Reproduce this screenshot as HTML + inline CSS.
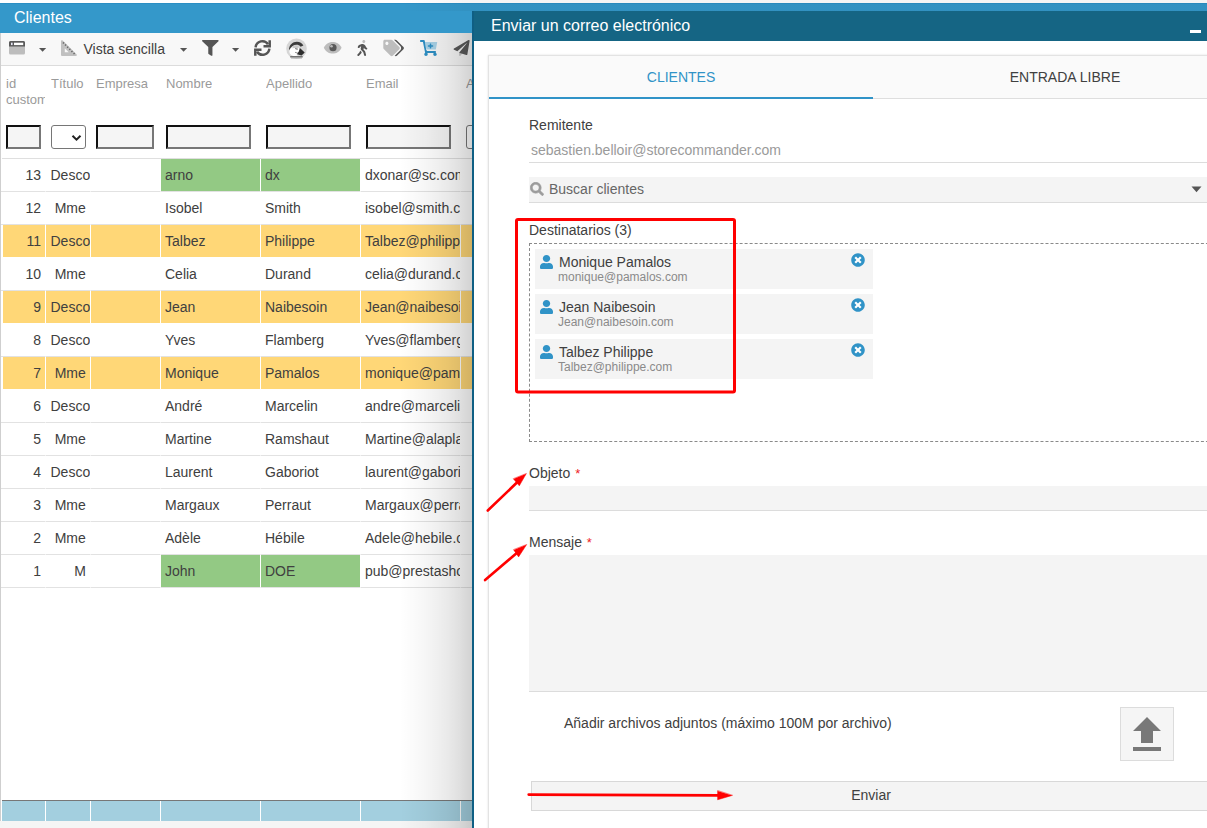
<!DOCTYPE html>
<html lang="es">
<head>
<meta charset="utf-8">
<title>Clientes</title>
<style>
*{box-sizing:border-box;margin:0;padding:0}
html,body{width:1207px;height:828px;overflow:hidden;background:#fff;font-family:"Liberation Sans",Arial,sans-serif;color:#404040}
#left{position:absolute;left:0;top:3px;width:480px;height:818px;background:#fff;border-left:1px solid #cfcfcf}
#bot{position:absolute;left:0;top:821px;width:480px;height:7px;background:#f5f5f5}
#ltitle{position:absolute;left:0;top:3px;width:1207px;height:30px;background:#3498ca;border-top:1px solid #2b8fc4;color:#fff;font-size:16px;line-height:27.500px;padding-left:14px}
#tbar{position:absolute;left:1px;top:33px;width:480px;height:33px;background:#f8f8f8;border-bottom:1px solid #dcdcdc}
#tbar .t{position:absolute;top:0;line-height:33px;font-size:14px;color:#404040}
#hdr{position:absolute;left:2px;top:66px;width:480px;height:93px;background:#fff;border-bottom:1px solid #dfdfdf}
#hdr .h{position:absolute;top:10px;font-size:13px;line-height:15.500px;color:#9a9a9a;overflow:hidden;white-space:normal}
#hdr .f{position:absolute;top:59px;height:24px;background:#f5f5f5;border:2px solid;border-color:#111 #777 #777 #111}
#hdr .s{position:absolute;top:59px;height:24px;background:#fff;border:1px solid #767676;border-radius:3px}
#rows{position:absolute;left:0;top:159px;width:480px}
.r{position:relative;height:33px;font-size:14px;line-height:32px;white-space:nowrap}
.r span{position:absolute;top:0;height:33px;overflow:hidden;border-bottom:1px solid #e2e2e2;border-right:1px solid #fff}
.r.y span{background:#ffd777;border-bottom-color:#fff}
.r::before{content:"";position:absolute;left:1px;top:32px;width:2px;height:1px;background:#e2e2e2}
.r.y::before{background:#fff}
.c0{left:3px;width:43px;text-align:right;padding-right:4px}
.c1{left:46px;width:45px;text-align:center;padding-left:4.500px}
.c2{left:91px;width:70px}
.c3{left:161px;width:100px;padding-left:4px}
.c4{left:261px;width:100px;padding-left:4px}
.c5{left:361px;width:100px;padding-left:4px}
.c6{left:461px;width:30px}
.r span.g{background:#93c984}
#foot{position:absolute;left:2px;top:800px;width:480px;height:21px;background:#a3cfdf;border-top:1px solid #777}
#foot i{position:absolute;top:0;width:1px;height:20px;background:#fff}
#shadow{position:absolute;left:400px;top:33px;width:72px;height:795px;background:linear-gradient(to right,rgba(0,0,0,0) 0%,rgba(0,0,0,.035) 35%,rgba(0,0,0,.082) 65%,rgba(0,0,0,.12) 82%,rgba(0,0,0,.175) 100%)}
#shadow2{position:absolute;left:400px;top:0;width:807px;height:11px;background:linear-gradient(to right,rgba(0,0,0,0) 0,rgba(0,0,0,.045) 72px,rgba(0,0,0,.045) 100%)}
#modal{position:absolute;left:472px;top:11px;width:740px;height:820px;background:#fff;border-left:2px solid #0f5f84;overflow:hidden}
#mhead{position:absolute;left:-2px;top:0;width:740px;height:30px;background:#156584;color:#fff;font-size:16px;line-height:29.500px;padding-left:19px}
#tabs{position:absolute;left:14px;top:44px;width:760px;height:800px;border:1px solid #e3e3e3;background:#fff;box-shadow:0 0 2px rgba(0,0,0,.13)}
#tabrow{position:absolute;left:0;top:0;width:760px;height:43px;background:#fafafa;border-bottom:1px solid #dedede}
.tab{position:absolute;top:0;height:43px;line-height:43px;width:384px;text-align:center;font-size:14px;color:#404040}
.tab.a{color:#3093c7;border-bottom:2px solid #3093c7}
.lbl{position:absolute;left:529px;font-size:14px;color:#404040;line-height:16px}
.lbl b{color:#ee1c24;font-weight:normal;margin-left:1px;font-size:13px}
.fld{position:absolute;left:529px;width:700px;background:#f4f4f4;border-bottom:1px solid #dcdcdc}
.rc{position:absolute;left:535px;width:338px;height:40px;background:#f4f4f4}
.rc .n{position:absolute;left:24px;top:5px;font-size:14px;line-height:16px;color:#404040}
.rc .e{position:absolute;left:23px;top:21px;font-size:12px;line-height:14px;color:#8a8a8a}
#min{position:absolute;left:718px;top:19px;width:11px;height:2.500px;background:#fff}
#dash{position:absolute;left:529px;top:243px;width:700px;height:199px;border:1px dashed #8a8a8a}
.rc .u{position:absolute;left:5px;top:5.500px}
.rc .x{position:absolute;left:316px;top:4.200px}
#upl{position:absolute;left:1120px;top:707px;width:54px;height:54px;background:#f5f5f5;border:1px solid #dcdcdc}
#upl svg{position:absolute;left:12px;top:9px}
#send{position:absolute;left:531px;top:781px;width:700px;height:30px;background:#f4f4f4;border:1px solid #d8d8d8;text-align:center;font-size:14px;line-height:27px;padding-right:20px;color:#404040}
</style>
</head>
<body>
<div id="left"></div><div id="bot"></div>
<div id="ltitle">Clientes</div>
<div id="tbar">
<span class="t" style="left:82.500px">Vista sencilla</span>
</div>
<svg id="ticons" style="position:absolute;left:0;top:33px" width="472" height="32" viewBox="0 33 472 32">
<!-- window -->
<rect x="9" y="41" width="16" height="13.500" rx="1.500" fill="#bdbdbd"/>
<path d="M9 46.500V42.500a1.500 1.500 0 0 1 1.500-1.500h13a1.500 1.500 0 0 1 1.500 1.500v4z" fill="#5a5a5a"/>
<rect x="11" y="42.700" width="1.600" height="2.400" fill="#e8e8f8"/><rect x="14" y="42.700" width="9.200" height="2.400" fill="#fff"/>
<path d="M39 48h7.200l-3.600 3.800z" fill="#555"/>
<!-- ruler triangle -->
<path d="M61 41.200a1 1 0 0 1 1.700-.7l13.800 13.800a1 1 0 0 1-.7 1.700H62a1 1 0 0 1-1-1zM64.800 48.300v3.900h3.900z" fill="#c0c0c0" fill-rule="evenodd"/>
<path d="M63 42.500L75.500 55" stroke="#666" stroke-width="1.600" stroke-dasharray="1.300 1.700" fill="none"/>
<path d="M180 48h7.200l-3.600 3.800z" fill="#555"/>
<!-- filter -->
<g transform="translate(202,40) scale(0.03262,0.03100)"><path fill="#555" d="M487.976 0H24.028C2.710 0-8.047 25.866 7.058 40.971L192 225.941V432c0 7.831 3.821 15.170 10.237 19.662l80 55.980C298.020 518.690 320 507.493 320 487.980V225.941l184.947-184.970C520.021 25.896 509.338 0 487.976 0z"/></g>
<path d="M232 48h7.200l-3.600 3.800z" fill="#555"/>
<!-- sync -->
<g fill="none" stroke="#555" stroke-width="2.500">
<path d="M255.600 47.300A6.800 6.800 0 0 1 268 44.200"/>
<path d="M269.700 40.200V46.200H263.500"/>
<path d="M269.400 48.700A6.800 6.800 0 0 1 257 51.800"/>
<path d="M255.300 55.800V49.800H261.500"/>
</g>
<!-- prestashop -->
<circle cx="296.500" cy="48.800" r="10.300" fill="#d6d6d6"/>
<ellipse cx="294.800" cy="51.400" rx="5.400" ry="4.900" fill="#fff"/>
<path d="M289 50.300C289 44.600 292.800 41.700 296.800 41.700C299.900 41.700 302.200 43.200 303.400 45.400L300.600 46.800C299.600 45.400 298.200 44.800 296.600 44.800C293.200 44.800 291 46.800 289 50.300z" fill="#3c3c3c"/>
<path d="M292.500 46.300C294 45.300 296.500 45 298.500 46.500L297.500 49.200C296 48 294.500 47.800 292.500 48.500z" fill="#c9c9c9"/>
<path d="M295.200 48.600L297.600 49.300" stroke="#666" stroke-width="1" fill="none"/>
<path d="M299.900 48L304.700 52.600L301.600 55.600L296.800 54.200L298.800 51.600z" fill="#2e2e2e"/>
<path d="M295 52.300L298 53.200" stroke="#777" stroke-width=".8" fill="none"/>
<rect x="290.200" y="56.300" width="12.500" height="1.100" fill="#4a4a4a"/>
<rect x="291" y="57.400" width="11" height="1.100" fill="#a8a8a8"/>
<!-- eye -->
<path d="M323.800 47.700C326 43.300 329.300 41.900 332.700 41.900S339.400 43.300 341.600 47.700C339.400 52.100 336.100 53.500 332.700 53.500S326 52.100 323.800 47.700z" fill="#bdbdbd"/>
<circle cx="333" cy="47.700" r="3.600" fill="#5a5a5a"/><circle cx="331.500" cy="46.200" r="1.300" fill="#bdbdbd"/>
<!-- walking -->
<g transform="translate(357.300,40) scale(0.03125)"><path fill="#bdbdbd" d="M208 96c26.500 0 48-21.500 48-48S234.500 0 208 0s-48 21.500-48 48 21.500 48 48 48z"/><path fill="#555" d="M302.500 245.100l-23.300-11.800-9.700-29.400c-14.700-44.600-55.700-75.800-102.200-75.900-36-.1-55.900 10.100-93.300 25.200-21.600 8.700-39.300 25.200-49.700 46.200L17.600 213c-7.800 15.800-1.500 35 14.200 42.900 15.600 7.900 34.600 1.500 42.500-14.300L81 228c3.500-7 9.300-12.500 16.500-15.400l26.800-10.800-15.200 60.700c-5.200 20.800.4 42.900 14.900 58.800l59.900 65.400c7.200 7.900 12.300 17.400 14.900 27.700l18.300 73.300c4.300 17.100 21.700 27.600 38.800 23.300 17.100-4.300 27.600-21.700 23.300-38.800l-22.200-89c-2.600-10.300-7.700-19.900-14.900-27.700l-45.500-49.700 17.200-68.700 5.500 16.500c5.300 16.100 16.700 29.400 31.700 37l23.300 11.800c15.600 7.900 34.600 1.500 42.500-14.300 7.700-15.700 1.400-35.100-14.300-43zM73.600 385.800c-3.200 8.100-8 15.400-14.200 21.500l-50 50.100c-12.500 12.500-12.500 32.800 0 45.300s32.700 12.500 45.200 0l59.400-59.400c6.100-6.100 10.900-13.400 14.200-21.500l13.500-33.800c-55.300-60.300-38.700-41.800-47.400-53.700l-20.700 51.500z"/></g>
<!-- tags -->
<g transform="translate(383.300,39.800) scale(0.03220)"><path fill="#bdbdbd" d="M497.941 225.941L286.059 14.059A48 48 0 0 0 252.118 0H48C21.490 0 0 21.490 0 48v204.118a48 48 0 0 0 14.059 33.941l211.882 211.882c18.744 18.745 49.136 18.746 67.882 0l204.118-204.118c18.745-18.745 18.745-49.137 0-67.882zM112 160c-26.510 0-48-21.490-48-48s21.490-48 48-48 48 21.490 48 48-21.490 48-48 48z"/><path fill="#555" d="M625.941 293.823L421.823 497.941c-18.745 18.745-49.137 18.745-67.882 0l-.360-.360L527.640 323.522c16.999-16.999 26.360-39.600 26.360-63.640s-9.362-46.641-26.360-63.640L331.397 0h48.721a48 48 0 0 1 33.941 14.059l211.882 211.882c18.745 18.745 18.745 49.137 0 67.882z"/></g>
<!-- cart plus -->
<g transform="translate(420,40) scale(0.03125)"><path fill="#a9d3e8" d="M159 64H552l-45 240H205z"/><path fill="#2d8fc4" d="M504.717 320H211.572l6.545 32h268.418c15.401 0 26.816 14.301 23.403 29.319l-5.517 24.276C523.112 414.668 536 433.828 536 456c0 31.202-25.519 56.444-56.824 55.994-29.823-.429-54.350-24.631-55.155-54.447-.440-16.287 6.085-31.049 16.803-41.548H231.176C241.553 426.165 248 440.326 248 456c0 31.813-26.528 57.431-58.670 55.938-28.540-1.325-51.751-24.385-53.251-52.917-1.158-22.034 10.436-41.455 28.051-51.586L93.883 64H24C10.745 64 0 53.255 0 40V24C0 10.745 10.745 0 24 0h102.529c11.401 0 21.228 8.021 23.513 19.190L159.208 64l40 256zM408 168h-48v-40c0-8.837-7.163-16-16-16h-16c-8.837 0-16 7.163-16 16v40h-48c-8.837 0-16 7.163-16 16v16c0 8.837 7.163 16 16 16h48v40c0 8.837 7.163 16 16 16h16c8.837 0 16-7.163 16-16v-40h48c8.837 0 16-7.163 16-16v-16c0-8.837-7.163-16-16-16z"/></g>
<!-- paper plane -->
<g transform="translate(453.600,40) scale(0.03125)"><path fill="#c8c8c8" d="M176 407v80.500c0 23.600 28.500 32.900 42.500 15.800L282 426z"/><path fill="#5a5a5a" d="M476 3.200L12.500 270.600c-18.100 10.400-15.800 35.600 2.200 43.200L121 358.400l287.300-253.200c5.500-4.900 13.300 2.600 8.600 8.300L176 407l230.600 71.200c14.200 6 30.400-2.900 33-18.200l72-432C515 7.800 493.300-6.800 476 3.200z"/></g>
</svg>
<div id="hdr">
<div class="h" style="left:4px;width:39px">id custom</div>
<div class="h" style="left:49px">Título</div>
<div class="h" style="left:94px">Empresa</div>
<div class="h" style="left:164px">Nombre</div>
<div class="h" style="left:264px">Apellido</div>
<div class="h" style="left:364px">Email</div>
<div class="h" style="left:464px">A</div>
<div class="f" style="left:4px;width:35px"></div>
<div class="s" style="left:49px;width:35px"><svg style="position:absolute;left:19px;top:7.500px" width="11" height="8" viewBox="0 0 11 8"><path d="M1.500 1.700L5.500 5.700L9.500 1.700" fill="none" stroke="#222" stroke-width="2"/></svg></div>
<div class="f" style="left:94px;width:58px"></div>
<div class="f" style="left:164px;width:85px"></div>
<div class="f" style="left:264px;width:85px"></div>
<div class="f" style="left:364px;width:85px"></div>
<div class="s" style="left:464px;width:35px"></div>
</div>
<div id="rows">
<div class="r"><span class="c0">13</span><span class="c1">Desco</span><span class="c2"></span><span class="c3 g">arno</span><span class="c4 g">dx</span><span class="c5">dxonar@sc.com</span><span class="c6"></span></div>
<div class="r"><span class="c0">12</span><span class="c1">Mme</span><span class="c2"></span><span class="c3">Isobel</span><span class="c4">Smith</span><span class="c5">isobel@smith.com</span><span class="c6"></span></div>
<div class="r y"><span class="c0">11</span><span class="c1">Desco</span><span class="c2"></span><span class="c3">Talbez</span><span class="c4">Philippe</span><span class="c5">Talbez@philippe.com</span><span class="c6"></span></div>
<div class="r"><span class="c0">10</span><span class="c1">Mme</span><span class="c2"></span><span class="c3">Celia</span><span class="c4">Durand</span><span class="c5">celia@durand.com</span><span class="c6"></span></div>
<div class="r y"><span class="c0">9</span><span class="c1">Desco</span><span class="c2"></span><span class="c3">Jean</span><span class="c4">Naibesoin</span><span class="c5">Jean@naibesoin.com</span><span class="c6"></span></div>
<div class="r"><span class="c0">8</span><span class="c1">Desco</span><span class="c2"></span><span class="c3">Yves</span><span class="c4">Flamberg</span><span class="c5">Yves@flamberg.com</span><span class="c6"></span></div>
<div class="r y"><span class="c0">7</span><span class="c1">Mme</span><span class="c2"></span><span class="c3">Monique</span><span class="c4">Pamalos</span><span class="c5">monique@pamalos.com</span><span class="c6"></span></div>
<div class="r"><span class="c0">6</span><span class="c1">Desco</span><span class="c2"></span><span class="c3">André</span><span class="c4">Marcelin</span><span class="c5">andre@marcelin.com</span><span class="c6"></span></div>
<div class="r"><span class="c0">5</span><span class="c1">Mme</span><span class="c2"></span><span class="c3">Martine</span><span class="c4">Ramshaut</span><span class="c5">Martine@alaplage.com</span><span class="c6"></span></div>
<div class="r"><span class="c0">4</span><span class="c1">Desco</span><span class="c2"></span><span class="c3">Laurent</span><span class="c4">Gaboriot</span><span class="c5">laurent@gaboriot.com</span><span class="c6"></span></div>
<div class="r"><span class="c0">3</span><span class="c1">Mme</span><span class="c2"></span><span class="c3">Margaux</span><span class="c4">Perraut</span><span class="c5">Margaux@perraut.com</span><span class="c6"></span></div>
<div class="r"><span class="c0">2</span><span class="c1">Mme</span><span class="c2"></span><span class="c3">Adèle</span><span class="c4">Hébile</span><span class="c5">Adele@hebile.com</span><span class="c6"></span></div>
<div class="r"><span class="c0">1</span><span class="c1" style="text-align:right;padding-right:4px">M</span><span class="c2"></span><span class="c3 g">John</span><span class="c4 g">DOE</span><span class="c5">pub@prestashop.com</span><span class="c6"></span></div>
</div>
<div id="foot"><i style="left:43px"></i><i style="left:88px"></i><i style="left:158px"></i><i style="left:258px"></i><i style="left:358px"></i><i style="left:458px"></i></div>
<div id="shadow"></div><div id="shadow2"></div>
<div id="modal">
<div id="mhead">Enviar un correo electrónico<i id="min"></i></div>
<div id="tabs">
<div id="tabrow"><div class="tab a" style="left:0">CLIENTES</div><div class="tab" style="left:384px">ENTRADA LIBRE</div></div>
</div>
</div>
<div class="lbl" style="top:117px">Remitente</div>
<div class="lbl" style="top:142px;left:531px;color:#9a9a9a">sebastien.belloir@storecommander.com</div>
<div class="fld" style="top:162px;height:1px;background:none"></div>
<div class="fld" style="top:177px;height:26px"></div>
<svg style="position:absolute;left:530px;top:182px" width="14" height="14" viewBox="-10 -10 532 532"><path fill="#9c9c9c" stroke="#9c9c9c" stroke-width="22" d="M505 442.700L405.300 343c-4.500-4.500-10.600-7-17-7H372c27.600-35.300 44-79.700 44-128C416 93.100 322.900 0 208 0S0 93.100 0 208s93.100 208 208 208c48.300 0 92.700-16.400 128-44v16.300c0 6.400 2.500 12.500 7 17l99.700 99.700c9.400 9.400 24.600 9.400 33.900 0l28.300-28.300c9.400-9.400 9.400-24.600.1-34zM208 336c-70.700 0-128-57.200-128-128 0-70.700 57.200-128 128-128 70.700 0 128 57.200 128 128 0 70.700-57.200 128-128 128z"/></svg>
<div class="lbl" style="top:181px;left:549px;color:#666">Buscar clientes</div>
<svg style="position:absolute;left:1191px;top:186px" width="11" height="7" viewBox="0 0 11 7"><path d="M.5.500h10L5.500 6.300z" fill="#555"/></svg>
<div class="lbl" style="top:222px">Destinatarios (3)</div>
<div id="dash"></div>
<div class="rc" style="top:249px"><svg class="u" width="13" height="14" viewBox="0 0 448 512" preserveAspectRatio="none"><path fill="#3093c7" d="M224 256c70.700 0 128-57.300 128-128S294.700 0 224 0 96 57.300 96 128s57.300 128 128 128zm89.600 32h-16.700c-22.200 10.200-46.900 16-72.900 16s-50.600-5.800-72.900-16h-16.700C60.200 288 0 348.200 0 422.400V464c0 26.500 21.500 48 48 48h352c26.500 0 48-21.500 48-48v-41.600c0-74.200-60.200-134.400-134.400-134.400z"/></svg><div class="n">Monique Pamalos<span class="c6"></span></div><div class="e">monique@pamalos.com<span class="c6"></span></div><svg class="x" width="14" height="14" viewBox="0 0 512 512"><circle cx="256" cy="256" r="200" fill="#fff"/><path fill="#3093c7" d="M256 8C119 8 8 119 8 256s111 248 248 248 248-111 248-248S393 8 256 8zm121.600 313.100c4.700 4.700 4.700 12.300 0 17L338 377.600c-4.700 4.700-12.300 4.700-17 0L256 312l-65.100 65.600c-4.700 4.700-12.300 4.700-17 0L134.400 338c-4.700-4.700-4.700-12.300 0-17l65.600-65-65.600-65.100c-4.700-4.700-4.700-12.300 0-17l39.600-39.600c4.700-4.700 12.300-4.700 17 0l65 65.700 65.100-65.600c4.700-4.700 12.300-4.700 17 0l39.600 39.600c4.700 4.700 4.700 12.300 0 17L312 256l65.600 65.100z"/></svg><span class="c6"></span></div>
<div class="rc" style="top:294px"><svg class="u" width="13" height="14" viewBox="0 0 448 512" preserveAspectRatio="none"><path fill="#3093c7" d="M224 256c70.700 0 128-57.300 128-128S294.700 0 224 0 96 57.300 96 128s57.300 128 128 128zm89.600 32h-16.700c-22.200 10.200-46.900 16-72.900 16s-50.600-5.800-72.900-16h-16.700C60.200 288 0 348.200 0 422.400V464c0 26.500 21.500 48 48 48h352c26.500 0 48-21.500 48-48v-41.600c0-74.200-60.200-134.400-134.400-134.400z"/></svg><div class="n">Jean Naibesoin<span class="c6"></span></div><div class="e">Jean@naibesoin.com<span class="c6"></span></div><svg class="x" width="14" height="14" viewBox="0 0 512 512"><circle cx="256" cy="256" r="200" fill="#fff"/><path fill="#3093c7" d="M256 8C119 8 8 119 8 256s111 248 248 248 248-111 248-248S393 8 256 8zm121.600 313.100c4.700 4.700 4.700 12.300 0 17L338 377.600c-4.700 4.700-12.300 4.700-17 0L256 312l-65.100 65.600c-4.700 4.700-12.300 4.700-17 0L134.400 338c-4.700-4.700-4.700-12.300 0-17l65.600-65-65.600-65.100c-4.700-4.700-4.700-12.300 0-17l39.600-39.600c4.700-4.700 12.300-4.700 17 0l65 65.700 65.100-65.600c4.700-4.700 12.300-4.700 17 0l39.600 39.600c4.700 4.700 4.700 12.300 0 17L312 256l65.600 65.100z"/></svg><span class="c6"></span></div>
<div class="rc" style="top:339px"><svg class="u" width="13" height="14" viewBox="0 0 448 512" preserveAspectRatio="none"><path fill="#3093c7" d="M224 256c70.700 0 128-57.300 128-128S294.700 0 224 0 96 57.300 96 128s57.300 128 128 128zm89.600 32h-16.700c-22.200 10.200-46.900 16-72.900 16s-50.600-5.800-72.900-16h-16.700C60.200 288 0 348.200 0 422.400V464c0 26.500 21.500 48 48 48h352c26.500 0 48-21.500 48-48v-41.600c0-74.200-60.200-134.400-134.400-134.400z"/></svg><div class="n">Talbez Philippe<span class="c6"></span></div><div class="e">Talbez@philippe.com<span class="c6"></span></div><svg class="x" width="14" height="14" viewBox="0 0 512 512"><circle cx="256" cy="256" r="200" fill="#fff"/><path fill="#3093c7" d="M256 8C119 8 8 119 8 256s111 248 248 248 248-111 248-248S393 8 256 8zm121.600 313.100c4.700 4.700 4.700 12.300 0 17L338 377.600c-4.700 4.700-12.300 4.700-17 0L256 312l-65.100 65.600c-4.700 4.700-12.300 4.700-17 0L134.400 338c-4.700-4.700-4.700-12.300 0-17l65.600-65-65.600-65.100c-4.700-4.700-4.700-12.300 0-17l39.600-39.600c4.700-4.700 12.300-4.700 17 0l65 65.700 65.100-65.600c4.700-4.700 12.300-4.700 17 0l39.600 39.600c4.700 4.700 4.700 12.300 0 17L312 256l65.600 65.100z"/></svg><span class="c6"></span></div>
<div class="lbl" style="top:465px">Objeto <b>*</b></div>
<div class="fld" style="top:486px;height:25px"></div>
<div class="lbl" style="top:534px">Mensaje <b>*</b></div>
<div class="fld" style="top:555px;height:137px"></div>
<div class="lbl" style="top:715px;left:564px">Añadir archivos adjuntos (máximo 100M por archivo)</div>
<div id="upl"><svg width="28" height="34" viewBox="0 0 28 34"><path d="M14 0L28 14H20V26H8V14H0z" fill="#787878"/><rect x="0" y="30" width="28" height="4" fill="#787878"/></svg></div>
<div id="send">Enviar</div>
<svg style="position:absolute;left:0;top:0;pointer-events:none" width="1207" height="828">
<rect x="516.500" y="219.500" width="218" height="172.500" rx="1.500" fill="none" stroke="#ff0000" stroke-width="3"/>
<g fill="#ff0000" stroke="#ff0000" stroke-width="2.500" stroke-linecap="round">
<path d="M487.800 510.500L518 481.500" fill="none" stroke-width="2.600"/><path d="M526.200 473.800L519.300 485.800L513.500 479z" stroke-width=".5"/>
<path d="M485.100 580.100L518 552" fill="none" stroke-width="2.600"/><path d="M526.500 544.800L518.600 556.900L513.700 549.900z" stroke-width=".5"/>
<path d="M528.700 794.600L719 795.400" fill="none" stroke-width="2.700"/><path d="M732.200 795.400L717.600 799.800V790.900z" stroke-width=".5"/>
</g>
</svg>
</body>
</html>
